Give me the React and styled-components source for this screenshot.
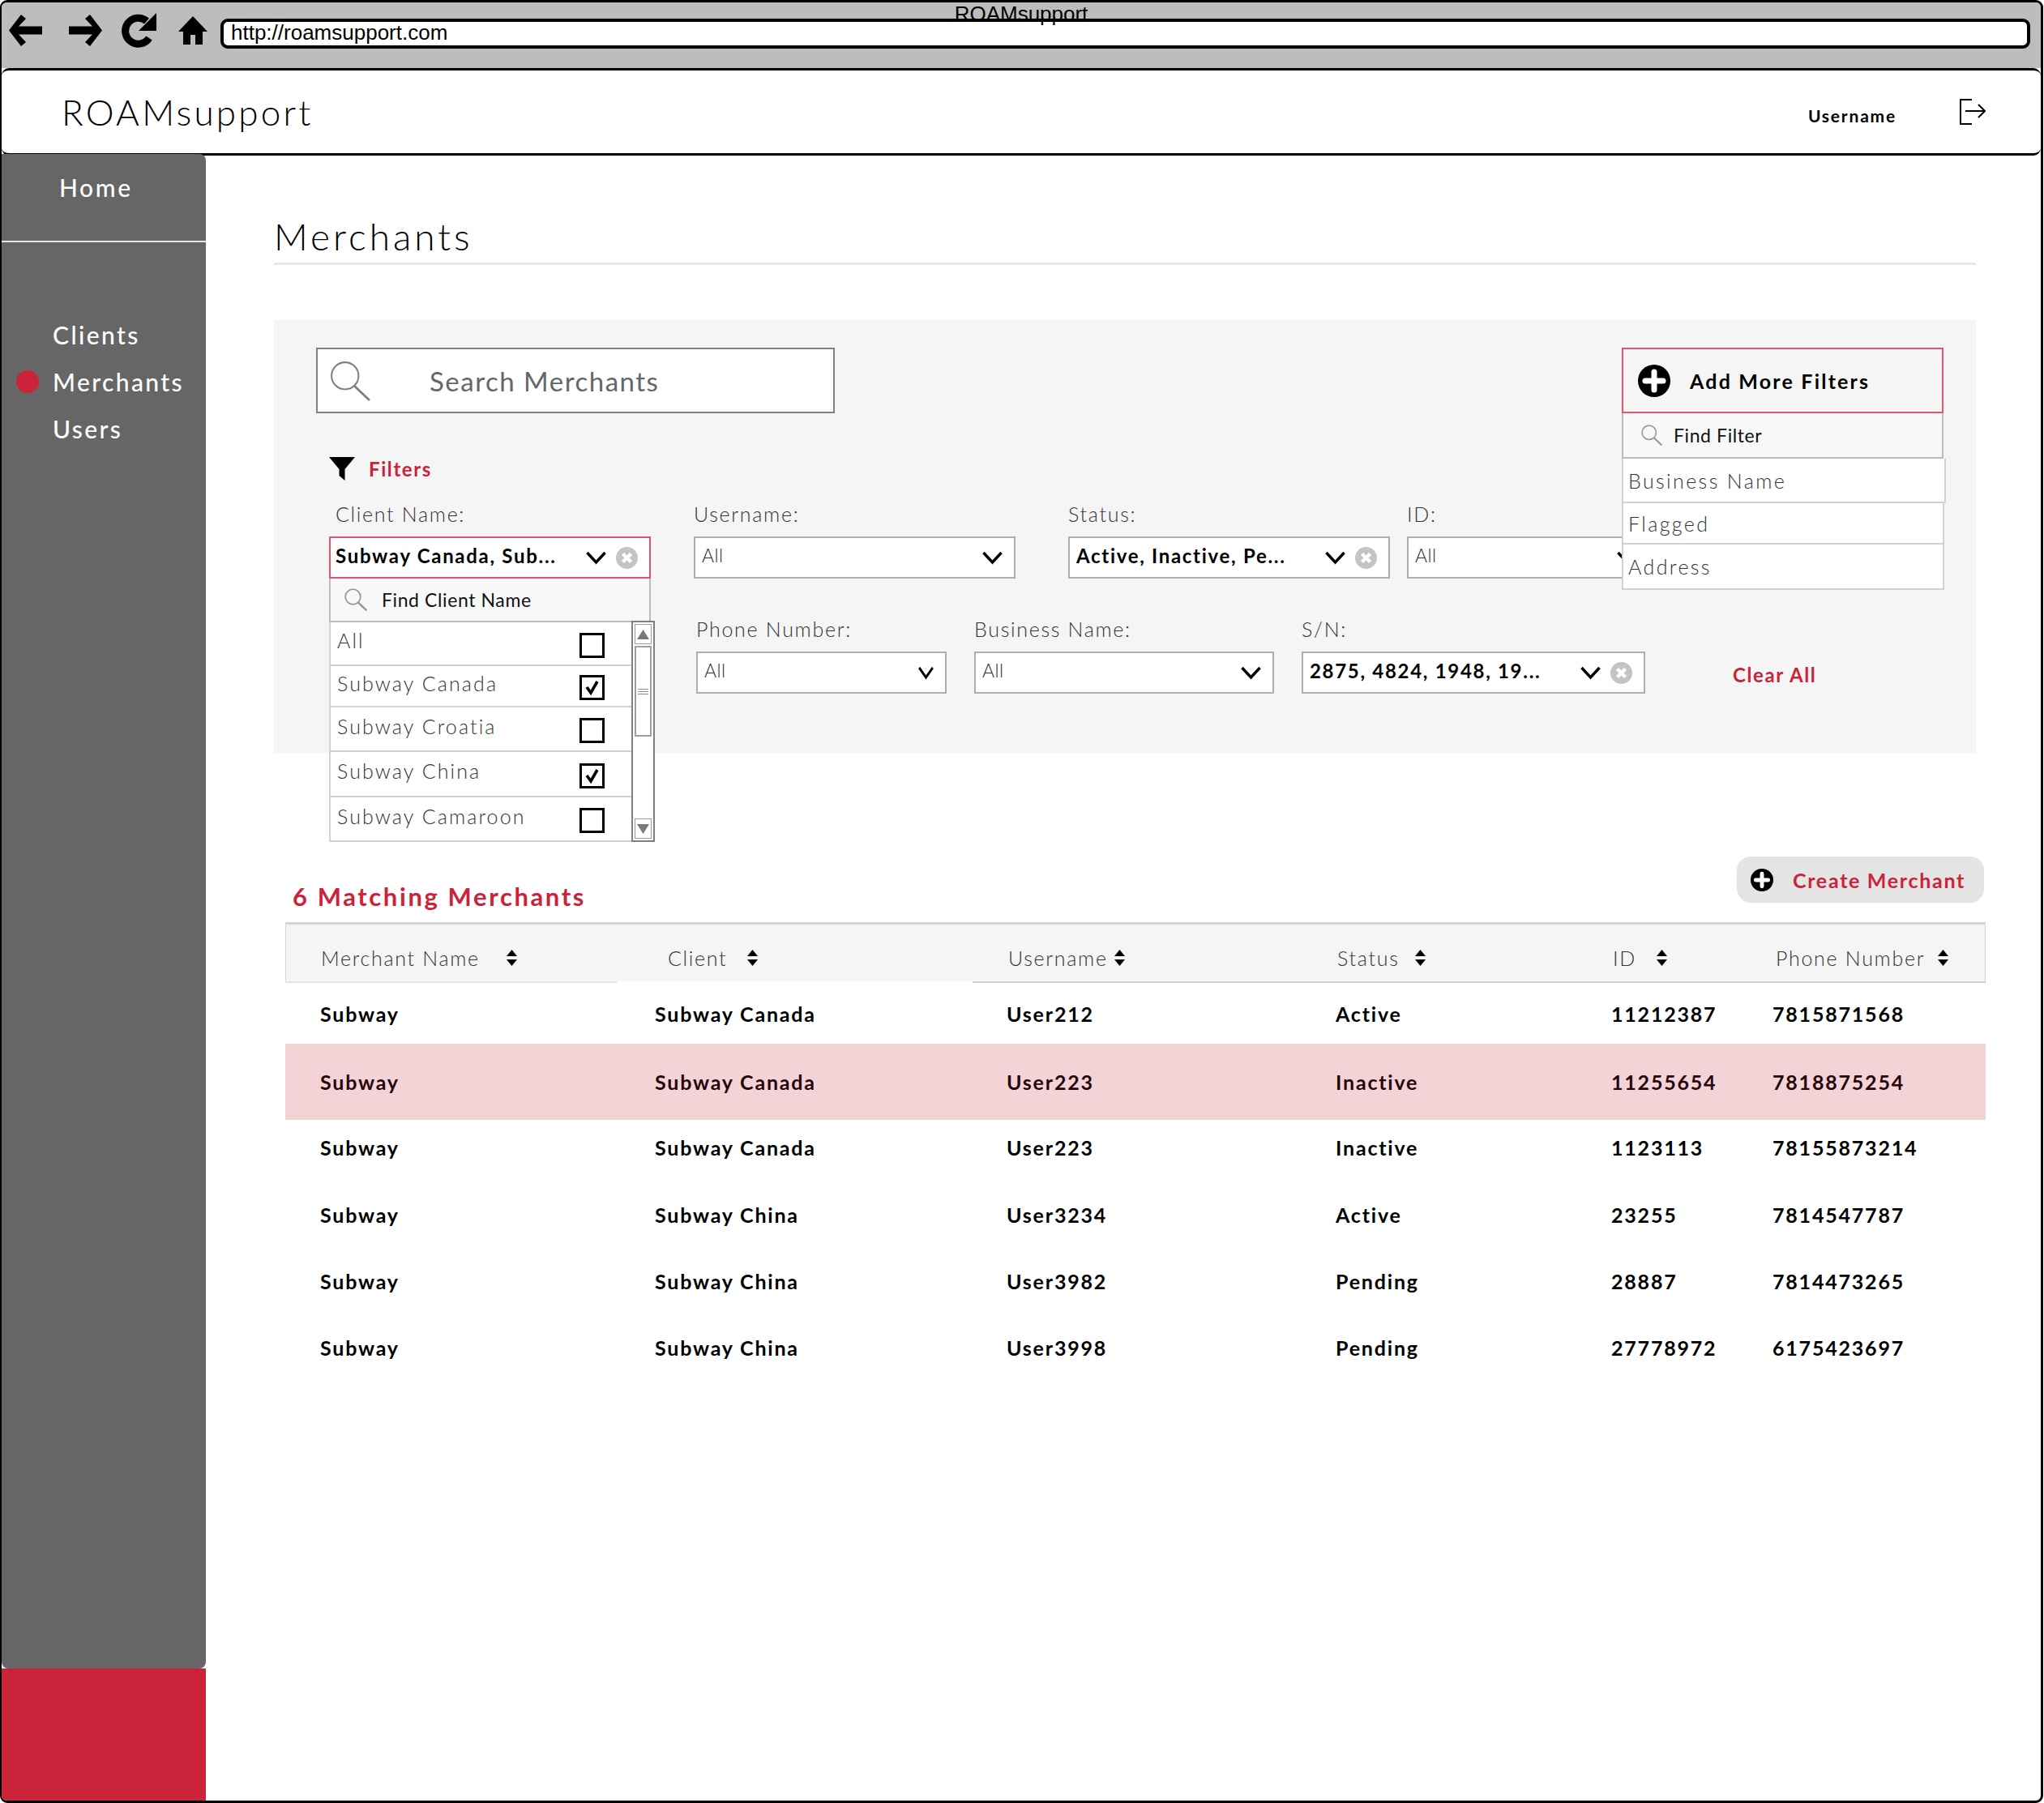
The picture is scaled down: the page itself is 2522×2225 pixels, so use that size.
import React from 'react';
import styled, { createGlobalStyle } from 'styled-components';

const RED = '#cb2339';
const FONT = '"Lato", "Noto Sans", sans-serif';

const GlobalStyle = createGlobalStyle`
    html, body {
        margin: 0;
        padding: 0;
        background: #fff;
    }
    * {
        box-sizing: border-box;
    }
`;

const merchants = [
    ['Subway', 'Subway Canada', 'User212', 'Active', '11212387', '7815871568'],
    ['Subway', 'Subway Canada', 'User223', 'Inactive', '11255654', '7818875254'],
    ['Subway', 'Subway Canada', 'User223', 'Inactive', '1123113', '78155873214'],
    ['Subway', 'Subway China', 'User3234', 'Active', '23255', '7814547787'],
    ['Subway', 'Subway China', 'User3982', 'Pending', '28887', '7814473265'],
    ['Subway', 'Subway China', 'User3998', 'Pending', '27778972', '6175423697'],
];

const rowLayout = [
    { h: 75, mt: 0 },
    { h: 94, mt: 0, selected: true },
    { h: 68, mt: 0 },
    { h: 82, mt: 8 },
    { h: 82, mt: 0 },
    { h: 82, mt: 0 },
];

const columns = [
    { label: 'Merchant Name', inset: 1, gap: 32 },
    { label: 'Client', inset: 16, gap: 24 },
    { label: 'Username', inset: 2, gap: 7 },
    { label: 'Status', inset: 2, gap: 19 },
    { label: 'ID', inset: 2, gap: 24 },
    { label: 'Phone Number', inset: 4, gap: 15 },
];

const clientOptions = [
    { name: 'All', checked: false, h: 54 },
    { name: 'Subway Canada', checked: true, h: 51 },
    { name: 'Subway Croatia', checked: false, h: 55 },
    { name: 'Subway China', checked: true, h: 56 },
    { name: 'Subway Camaroon', checked: false, h: 55 },
];

const Frame = styled.div`
    position: relative;
    display: flex;
    flex-direction: column;
    width: 2521px;
    height: 2225px;
    margin-top: 0;
    border: 3px solid #000;
    border-left-width: 2px;
    border-radius: 9px;
    overflow: hidden;
    font-family: ${FONT};
    color: #000;
`;

const BrowserBar = styled.div`
    position: relative;
    display: flex;
    align-items: center;
    height: 81px;
    padding: 0 13px 12px 9px;
    background: #bdbdbd;
`;

const BrowserTitle = styled.div`
    position: absolute;
    top: 0;
    left: 0;
    right: 0;
    text-align: center;
    font: 26px/28px "Liberation Sans", Arial, sans-serif;
`;

const NavIcon = styled.svg`
    flex: none;
    display: block;
    margin-right: ${(p) => p.$mr}px;
`;

const AddressBar = styled.div`
    flex: 1;
    height: 37px;
    margin-top: 8px;
    padding-left: 9px;
    border: 4px solid #000;
    border-radius: 9px;
    background: #fff;
    font: 26px/26px "Liberation Sans", Arial, sans-serif;
`;

const AppHeader = styled.header`
    display: flex;
    align-items: center;
    justify-content: space-between;
    height: 108px;
    padding: 0 68px 0 74px;
    border-top: 3px solid #000;
    border-bottom: 3px solid #000;
    border-radius: 9px;
    background: #fff;
`;

const Logo = styled.div`
    font-size: 44px;
    font-weight: 300;
    letter-spacing: 3.2px;
`;

const UserBox = styled.div`
    display: flex;
    align-items: center;
    gap: 78px;
`;

const UserName = styled.span`
    font-size: 21px;
    font-weight: 700;
    letter-spacing: 1.8px;
    padding-top: 8px;
`;

const Body = styled.div`
    flex: 1;
    display: flex;
    margin-top: -2px;
    min-height: 0;
`;

const SideColumn = styled.aside`
    flex: none;
    display: flex;
    flex-direction: column;
    width: 252px;
`;

const SideNav = styled.nav`
    flex: 1;
    background: #666;
    border-radius: 0 8px 8px 8px;
    color: #fff;
`;

const HomeLink = styled.div`
    height: 109px;
    padding: 21px 0 0 71px;
    border-bottom: 2px solid #e6e6e6;
    font-size: 30px;
    line-height: 40px;
    font-weight: 500;
    letter-spacing: 2.6px;
`;

const NavList = styled.div`
    display: flex;
    flex-direction: column;
    gap: 18px;
    padding: 94px 0 0 18px;
`;

const NavItem = styled.div`
    display: flex;
    align-items: center;
    height: 40px;
    font-size: 30px;
    font-weight: 500;
    letter-spacing: 2.4px;
`;

const NavDot = styled.span`
    flex: none;
    width: 28px;
    height: 28px;
    margin-right: 17px;
    border-radius: 50%;
    background: ${(p) => (p.$active ? RED : 'transparent')};
`;

const RedBlock = styled.div`
    flex: none;
    height: 163px;
    background: ${RED};
`;

const Main = styled.main`
    flex: 1;
    padding: 0 80px 0 84px;
`;

const PageTitle = styled.h1`
    height: 137px;
    margin: 0;
    padding-top: 74px;
    border-bottom: 3px solid #e8e8e8;
    font-size: 46px;
    line-height: 56px;
    font-weight: 300;
    letter-spacing: 4px;
`;

const FilterPanel = styled.section`
    position: relative;
    height: 534px;
    margin-top: 68px;
    padding: 34px 40px 0 68px;
    background: #f5f5f5;
`;

const TopRow = styled.div`
    display: flex;
    justify-content: space-between;
    margin-left: -16px;
`;

const SearchBox = styled.div`
    display: flex;
    align-items: center;
    width: 640px;
    height: 81px;
    padding-left: 15px;
    border: 2px solid #808080;
    background: #fff;
    color: #666;
    font-size: 33px;
    letter-spacing: 1.5px;
`;

const SearchPlaceholder = styled.span`
    margin-left: 73px;
`;

const AddFilters = styled.div`
    position: relative;
    width: 397px;
`;

const AddFiltersButton = styled.div`
    display: flex;
    align-items: center;
    height: 81px;
    padding-left: 18px;
    border: 2px solid #e0576e;
    font-size: 25px;
    font-weight: 700;
    letter-spacing: 2.2px;
`;

const AddFiltersText = styled.span`
    margin-left: 24px;
`;

const FilterMenu = styled.div`
    position: absolute;
    top: 100%;
    left: 0;
    width: 400px;
    z-index: 2;
`;

const FindRow = styled.div`
    display: flex;
    align-items: center;
    width: ${(p) => p.$w}px;
    height: ${(p) => p.$h}px;
    padding-left: ${(p) => p.$pl}px;
    border: 2px solid #bdbdbd;
    border-top: 0;
    background: #f8f8f8;
    font-size: 23px;
    letter-spacing: 0.6px;
    color: #111;
`;

const FindText = styled.span`
    margin-left: ${(p) => p.$ml}px;
`;

const FilterOption = styled.div`
    display: flex;
    align-items: center;
    width: ${(p) => p.$w}px;
    height: ${(p) => p.$h}px;
    padding-left: 6px;
    border: 2px solid #d2d2d2;
    border-top: 0;
    background: #fff;
    color: #333;
    font-size: 25px;
    font-weight: 300;
    letter-spacing: 2.4px;
`;

const FiltersHead = styled.div`
    display: flex;
    align-items: center;
    gap: 17px;
    margin-top: 54px;
    color: ${RED};
    font-size: 24px;
    font-weight: 700;
    letter-spacing: 1.6px;
`;

const FieldRow = styled.div`
    display: flex;
    align-items: flex-start;
    margin-top: ${(p) => p.$mt}px;
`;

const Field = styled.div`
    position: relative;
    flex: none;
    width: ${(p) => p.$w}px;
    margin-left: ${(p) => p.$ml || 0}px;
    z-index: ${(p) => (p.$open ? 3 : 'auto')};
`;

const FieldLabel = styled.div`
    height: 32px;
    margin-bottom: 12px;
    padding-left: ${(p) => p.$inset || 0}px;
    color: #333;
    font-size: 25px;
    font-weight: 300;
    line-height: 32px;
    letter-spacing: 1.7px;
`;

const SelectBox = styled.div`
    display: flex;
    align-items: center;
    justify-content: space-between;
    height: 52px;
    padding: 0 14px 0 ${(p) => (p.$open ? 6 : 8)}px;
    border: 2px solid ${(p) => (p.$open ? '#dc5568' : '#adadad')};
    background: #fff;
    color: #333;
`;

const SelectValue = styled.span`
    padding-bottom: 6px;
    font-size: ${(p) => (p.$bold ? 24 : 23)}px;
    font-weight: ${(p) => (p.$bold ? 700 : 300)};
    letter-spacing: ${(p) => (p.$bold ? 1.7 : 0.5)}px;
    color: ${(p) => (p.$bold ? '#000' : '#333')};
    white-space: nowrap;
`;

const SelectControls = styled.span`
    display: flex;
    align-items: center;
    gap: 12px;
`;

const ClientDropdown = styled.div`
    position: absolute;
    top: 100%;
    left: 0;
    width: 402px;
`;

const ClientList = styled.div`
    display: flex;
    align-items: stretch;
`;

const ClientRows = styled.div`
    width: 373px;
`;

const ClientRow = styled.div`
    display: flex;
    align-items: center;
    justify-content: space-between;
    height: ${(p) => p.$h}px;
    padding: 0 33px 0 8px;
    border: 2px solid #d2d2d2;
    border-top: 0;
    border-right: 0;
    background: #fff;
    color: #333;
    font-size: 25px;
    font-weight: 300;
    letter-spacing: 2.1px;
`;

const ClientName = styled.span`
    padding-bottom: 8px;
`;

const CheckBox = styled.span`
    flex: none;
    display: flex;
    align-items: center;
    justify-content: center;
    width: 31px;
    height: 31px;
    margin-top: 4px;
    border: 3px solid #000;
    background: #fff;
`;

const ScrollBar = styled.div`
    flex: none;
    display: flex;
    flex-direction: column;
    width: 29px;
    margin-top: -2px;
    padding: 2px;
    border: 2px solid #808080;
    background: #fff;
`;

const ScrollButton = styled.div`
    display: flex;
    align-items: center;
    justify-content: center;
    height: 25px;
    border: 1px solid #9a9a9a;
`;

const ScrollThumb = styled.div`
    display: flex;
    flex-direction: column;
    justify-content: center;
    gap: 2px;
    height: 112px;
    margin-top: 2px;
    padding: 0 2px;
    border: 2px solid #a0a0a0;
`;

const GripLine = styled.span`
    height: 1px;
    background: #8a8a8a;
`;

const ScrollSpace = styled.div`
    flex: 1;
`;

const ClearAll = styled.div`
    margin: 28px 0 0 108px;
    padding-top: 30px;
    color: ${RED};
    font-size: 24px;
    font-weight: 700;
    letter-spacing: 1.6px;
    white-space: nowrap;
`;

const ResultsHead = styled.div`
    display: flex;
    align-items: flex-end;
    justify-content: space-between;
    height: 57px;
    margin: 128px -10px 0 18px;
`;

const ResultsTitle = styled.h2`
    margin: 0 0 -12px -1px;
    padding-left: 6px;
    color: ${RED};
    font-size: 31px;
    font-weight: 700;
    line-height: 40px;
    letter-spacing: 2.6px;
`;

const CreateButton = styled.div`
    display: flex;
    align-items: center;
    gap: 24px;
    width: 305px;
    height: 57px;
    padding-left: 17px;
    border-radius: 17px;
    background: #e4e4e4;
    color: ${RED};
    font-size: 25px;
    font-weight: 700;
    letter-spacing: 1.7px;
`;

const Table = styled.div`
    margin: 24px -12px 0 14px;
`;

const gridColumns = '413px 434px 406px 340px 199px 1fr';

const HeadRow = styled.div`
    display: grid;
    grid-template-columns: ${gridColumns};
    align-items: center;
    height: 73px;
    padding: 12px 0 0 42px;
    border: 1px solid #d4d4d4;
    border-top: 3px solid #d4d4d4;
    border-bottom: 0;
    background: #f5f5f5;
`;

const HeadCell = styled.div`
    display: flex;
    align-items: center;
    padding-left: ${(p) => p.$inset}px;
    color: #333;
    font-size: 25px;
    font-weight: 300;
    letter-spacing: 1.7px;
`;

const SortIcon = styled.svg`
    flex: none;
    margin-left: ${(p) => p.$gap}px;
`;

const HeadRules = styled.div`
    display: flex;
    height: 2px;
`;

const HeadRule = styled.span`
    flex: ${(p) => (p.$w ? `0 0 ${p.$w}px` : 1)};
    background: ${(p) => p.$c};
`;

const Row = styled.div`
    display: grid;
    grid-template-columns: ${gridColumns};
    align-items: center;
    height: ${(p) => p.$h}px;
    margin-top: ${(p) => p.$mt}px;
    padding-left: 43px;
    background: ${(p) => (p.$selected ? '#f4d3d7' : 'transparent')};
    color: ${(p) => (p.$selected ? '#25060a' : '#000')};
    font-size: 25px;
    font-weight: 700;
    letter-spacing: 1.8px;
`;

const Cell = styled.div`
    white-space: nowrap;
`;

const SearchGlass = ({ size, color = '#808080', width = 2 }) => (
    <svg width={size} height={size} viewBox="0 0 48 48" fill="none" stroke={color} strokeWidth={width}>
        <circle cx="18" cy="18" r="16" />
        <path d="M29 30 L47 47" strokeWidth={width * 1.4} />
    </svg>
);

const PlusCircle = ({ size }) => (
    <svg width={size} height={size} viewBox="0 0 40 40">
        <circle cx="20" cy="20" r="20" fill="#000" />
        <path d="M20 9 V31 M9 20 H31" stroke="#fff" strokeWidth="7" strokeLinecap="round" />
    </svg>
);

const Chevron = ({ w = 25, h = 14 }) => (
    <svg width={w} height={h + 4} viewBox="0 0 25 18" fill="none" stroke="#000" strokeWidth="3.4" preserveAspectRatio="none">
        <path d="M1.5 3 L12.5 15 L23.5 3" />
    </svg>
);

const ClearIcon = () => (
    <svg width="27" height="27" viewBox="0 0 27 27">
        <circle cx="13.5" cy="13.5" r="13.5" fill="#c4c4c4" />
        <path d="M8.5 8.5 L18.5 18.5 M18.5 8.5 L8.5 18.5" stroke="#fff" strokeWidth="4.4" />
    </svg>
);

const Tick = () => (
    <svg width="19" height="19" viewBox="0 0 19 19" fill="none" stroke="#000" strokeWidth="3.6">
        <path d="M3 9 L8 16 L16 2" />
    </svg>
);

const Triangle = ({ down }) => (
    <svg width="15" height="12" viewBox="0 0 15 12" fill="#7a7a7a">
        <path d={down ? 'M0 0 H15 L7.5 12 Z' : 'M7.5 0 L15 12 H0 Z'} />
    </svg>
);

const Sort = ({ gap }) => (
    <SortIcon $gap={gap} width="15" height="20" viewBox="0 0 15 20" fill="#000">
        <path d="M7.5 0 L14 8 H1 Z M1 12 H14 L7.5 20 Z" />
    </SortIcon>
);

const Select = ({ width, ml, label, inset, value, bold, clearable, open, chevronWidth, children }) => (
    <Field $w={width} $ml={ml} $open={open}>
        <FieldLabel $inset={inset}>{label}</FieldLabel>
        <SelectBox $open={open}>
            <SelectValue $bold={bold}>{value}</SelectValue>
            <SelectControls>
                <Chevron w={chevronWidth} />
                {clearable && <ClearIcon />}
            </SelectControls>
        </SelectBox>
        {children}
    </Field>
);

const App = () => {
    return (
        <Frame>
            <GlobalStyle />
            <BrowserBar>
                <BrowserTitle>ROAMsupport</BrowserTitle>
                <NavIcon $mr={33} width="41" height="39" viewBox="0 0 41 39">
                    <path d="M0 19.5 L15 0 L21 5 L12 14.5 H41 V24.5 H12 L21 34 L15 39 Z" />
                </NavIcon>
                <NavIcon $mr={22} width="41" height="39" viewBox="0 0 41 39">
                    <path d="M41 19.5 L26 0 L20 5 L29 14.5 H0 V24.5 H29 L20 34 L26 39 Z" />
                </NavIcon>
                <NavIcon $mr={27} width="45" height="43" viewBox="0 0 45 43">
                    <path d="M36 31 A16 16 0 1 1 33 10" fill="none" stroke="#000" strokeWidth="9" />
                    <path d="M45 0 V22 H23 Z" />
                </NavIcon>
                <NavIcon $mr={16} width="36" height="35" viewBox="0 0 36 35">
                    <path d="M18 0 L36 19 H30 V35 H21 V23 H15 V35 H6 V19 H0 Z" />
                </NavIcon>
                <AddressBar>http://roamsupport.com</AddressBar>
            </BrowserBar>
            <AppHeader>
                <Logo>ROAMsupport</Logo>
                <UserBox>
                    <UserName>Username</UserName>
                    <svg width="32" height="32" viewBox="0 0 32 32" fill="none" stroke="#000" strokeWidth="2">
                        <path d="M15 1 H1 V31 H15 M7 15 H31 M23 7 L31 15 L23 23" />
                    </svg>
                </UserBox>
            </AppHeader>
            <Body>
                <SideColumn>
                    <SideNav>
                        <HomeLink>Home</HomeLink>
                        <NavList>
                            <NavItem><NavDot />Clients</NavItem>
                            <NavItem><NavDot $active />Merchants</NavItem>
                            <NavItem><NavDot />Users</NavItem>
                        </NavList>
                    </SideNav>
                    <RedBlock />
                </SideColumn>
                <Main>
                    <PageTitle>Merchants</PageTitle>
                    <FilterPanel>
                        <TopRow>
                            <SearchBox>
                                <SearchGlass size={50} />
                                <SearchPlaceholder>Search Merchants</SearchPlaceholder>
                            </SearchBox>
                            <AddFilters>
                                <AddFiltersButton>
                                    <PlusCircle size={40} />
                                    <AddFiltersText>Add More Filters</AddFiltersText>
                                </AddFiltersButton>
                                <FilterMenu>
                                    <FindRow $w={397} $h={56} $pl={22}>
                                        <SearchGlass size={26} color="#999" width={3} />
                                        <FindText $ml={14}>Find Filter</FindText>
                                    </FindRow>
                                    <FilterOption $w={400} $h={55}>Business Name</FilterOption>
                                    <FilterOption $w={398} $h={51}>Flagged</FilterOption>
                                    <FilterOption $w={398} $h={56}>Address</FilterOption>
                                </FilterMenu>
                            </AddFilters>
                        </TopRow>
                        <FiltersHead>
                            <svg width="32" height="29" viewBox="0 0 32 29">
                                <path d="M0 0 H32 L19.5 15 V29 L12.5 23 V15 Z" />
                            </svg>
                            Filters
                        </FiltersHead>
                        <FieldRow $mt={25}>
                            <Select
                                open
                                bold
                                clearable
                                width={397}
                                inset={8}
                                label="Client Name:"
                                value="Subway Canada, Sub..."
                            >
                                <ClientDropdown>
                                    <FindRow $w={397} $h={54} $pl={17}>
                                        <SearchGlass size={28} color="#999" width={3} />
                                        <FindText $ml={18}>Find Client Name</FindText>
                                    </FindRow>
                                    <ClientList>
                                        <ClientRows>
                                            {clientOptions.map((option) => (
                                                <ClientRow key={option.name} $h={option.h}>
                                                    <ClientName>{option.name}</ClientName>
                                                    <CheckBox>{option.checked && <Tick />}</CheckBox>
                                                </ClientRow>
                                            ))}
                                        </ClientRows>
                                        <ScrollBar>
                                            <ScrollButton><Triangle /></ScrollButton>
                                            <ScrollThumb>
                                                <GripLine />
                                                <GripLine />
                                                <GripLine />
                                            </ScrollThumb>
                                            <ScrollSpace />
                                            <ScrollButton><Triangle down /></ScrollButton>
                                        </ScrollBar>
                                    </ClientList>
                                </ClientDropdown>
                            </Select>
                            <Select width={397} ml={53} label="Username:" value="All" />
                            <Select bold clearable width={397} ml={65} label="Status:" value="Active, Inactive, Pe..." />
                            <Select width={300} ml={21} label="ID:" value="All" />
                        </FieldRow>
                        <FieldRow $mt={46}>
                            <Select width={309} ml={453} label="Phone Number:" value="All" chevronWidth={19} />
                            <Select width={370} ml={34} label="Business Name:" value="All" />
                            <Select bold clearable width={424} ml={34} label="S/N:" value="2875, 4824, 1948, 19..." />
                            <ClearAll>Clear All</ClearAll>
                        </FieldRow>
                    </FilterPanel>
                    <ResultsHead>
                        <ResultsTitle>6 Matching Merchants</ResultsTitle>
                        <CreateButton>
                            <PlusCircle size={28} />
                            Create Merchant
                        </CreateButton>
                    </ResultsHead>
                    <Table>
                        <HeadRow>
                            {columns.map((column) => (
                                <HeadCell key={column.label} $inset={column.inset}>
                                    {column.label}
                                    <Sort gap={column.gap} />
                                </HeadCell>
                            ))}
                        </HeadRow>
                        <HeadRules>
                            <HeadRule $w={409} $c="#e6e6e6" />
                            <HeadRule $w={439} $c="#fff" />
                            <HeadRule $c="#cfcfcf" />
                        </HeadRules>
                        {merchants.map((merchant, i) => (
                            <Row key={merchant[2] + merchant[4]} $h={rowLayout[i].h} $mt={rowLayout[i].mt} $selected={rowLayout[i].selected}>
                                {merchant.map((value, j) => <Cell key={j}>{value}</Cell>)}
                            </Row>
                        ))}
                    </Table>
                </Main>
            </Body>
        </Frame>
    );
};

export default App;
